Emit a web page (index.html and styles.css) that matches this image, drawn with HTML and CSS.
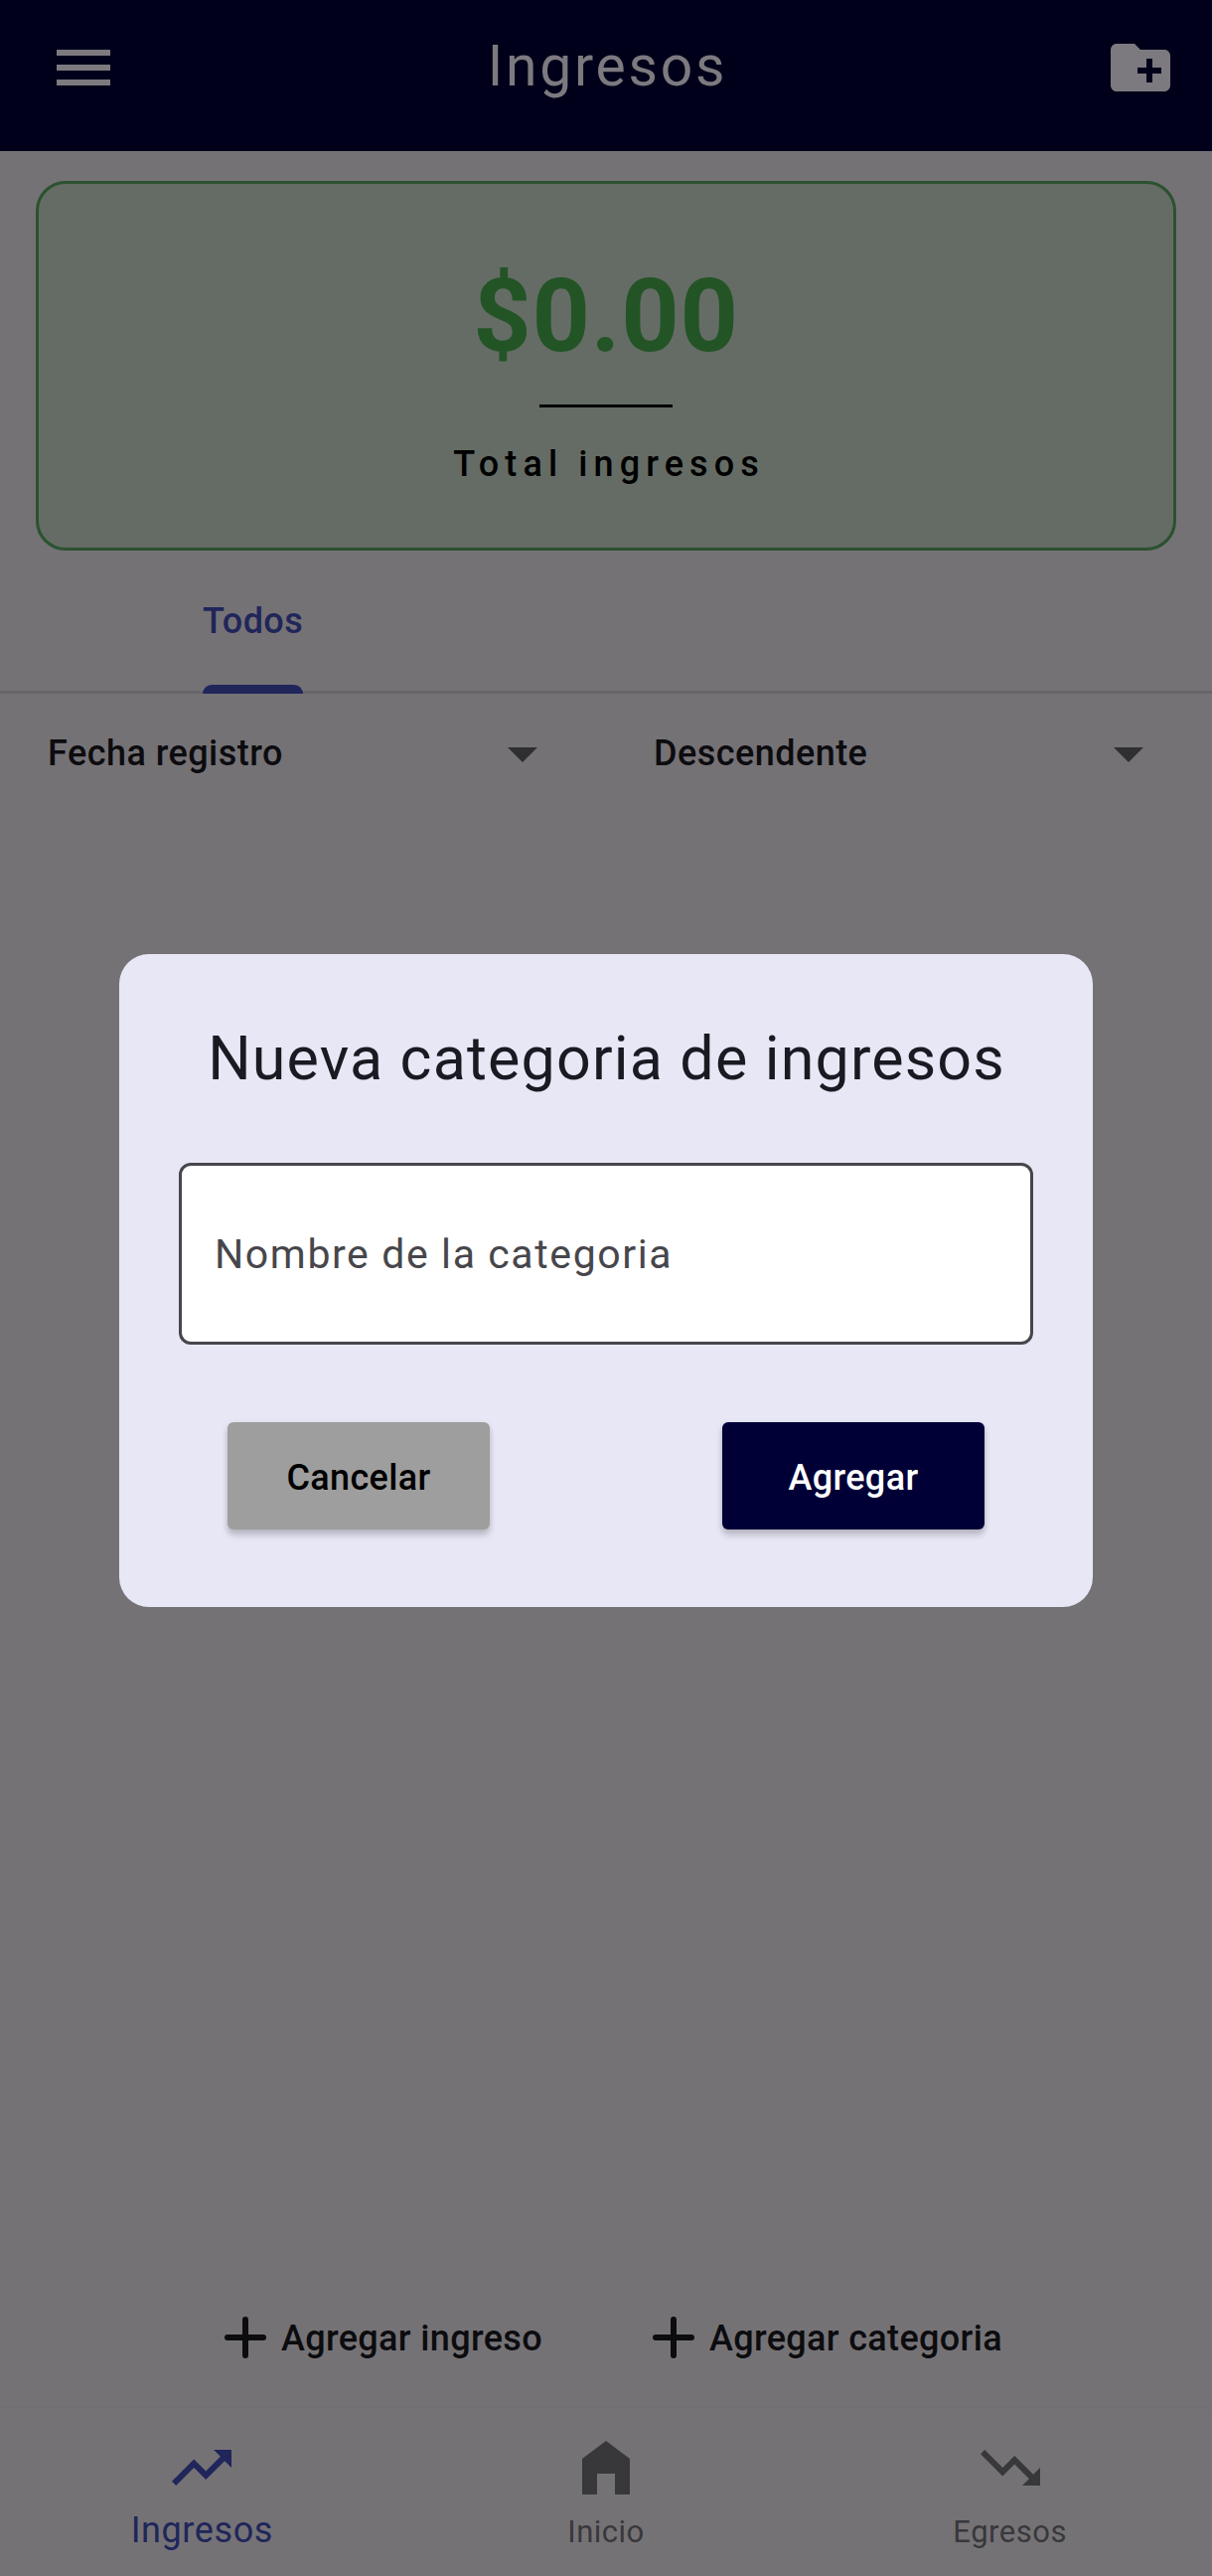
FILE: index.html
```html
<!DOCTYPE html>
<html lang="es">
<head>
<meta charset="utf-8">
<title>Ingresos</title>
<link rel="stylesheet" href="styles.css">
</head>
<body>
<div class="app">
  <header class="topbar">
    <svg class="icon" viewBox="0 0 24 24"><path d="M3 18h18v-2H3v2zm0-5h18v-2H3v2zm0-7v2h18V6H3z"/></svg>
    <h1 class="topbar-title">Ingresos</h1>
    <svg class="icon" viewBox="0 0 24 24"><path d="M20 6h-8l-2-2H4c-1.11 0-1.99.89-1.99 2L2 18c0 1.11.89 2 2 2h16c1.11 0 2-.89 2-2V8c0-1.11-.89-2-2-2zm-1 8h-3v3h-2v-3h-3v-2h3V9h2v3h3v2z"/></svg>
  </header>
  <section class="summary">
    <div class="amount">$0.00</div>
    <div class="rule"></div>
    <div class="caption">Total ingresos</div>
  </section>
  <nav class="tabs"><div class="tab"><span>Todos</span><div class="indicator"></div></div></nav>
  <div class="filters">
    <div class="filter"><span>Fecha registro</span><svg class="icon caret" viewBox="0 0 24 24"><path d="M7 10l5 5 5-5z"/></svg></div>
    <div class="filter"><span>Descendente</span><svg class="icon caret" viewBox="0 0 24 24"><path d="M7 10l5 5 5-5z"/></svg></div>
  </div>
  <main class="list"></main>
  <div class="actions">
    <div class="action"><svg class="plus" viewBox="0 0 42 42"><path d="M21 3v36M3 21h36"/></svg><span>Agregar ingreso</span></div>
    <div class="action"><svg class="plus" viewBox="0 0 42 42"><path d="M21 3v36M3 21h36"/></svg><span>Agregar categoria</span></div>
  </div>
  <footer class="bottomnav">
    <div class="item active"><svg class="icon" viewBox="0 0 24 24"><path d="M16 6l2.29 2.29-4.88 4.88-4-4L2 16.59 3.41 18l6-6 4 4 6.3-6.29L22 12V6z"/></svg><span>Ingresos</span></div>
    <div class="item"><svg class="icon" viewBox="0 0 24 24"><path d="M4 21V9l8-6 8 6v12h-5v-7H9v7z"/></svg><span>Inicio</span></div>
    <div class="item"><svg class="icon" viewBox="0 0 24 24"><path d="M16 18l2.29-2.29-4.88-4.88-4 4L2 7.41 3.41 6l6 6 4-4 6.3 6.29L22 12v6z"/></svg><span>Egresos</span></div>
  </footer>
</div>
<div class="scrim">
  <div class="dialog">
    <h2 class="dialog-title">Nueva categoria de ingresos</h2>
    <div class="field">Nombre de la categoria</div>
    <div class="buttons">
      <button class="btn cancel">Cancelar</button>
      <button class="btn add">Agregar</button>
    </div>
  </div>
</div>
</body>
</html>
```
FILE: styles.css
```css
* { box-sizing: border-box; margin: 0; }
body { font-family: Roboto, sans-serif; font-size: 36px; font-weight: 500; letter-spacing: .38px; background: #757276; color: #0c0c0f; }
.app { height: 2592px; display: flex; flex-direction: column; }
.icon { width: 72px; height: 72px; fill: currentColor; display: block; }

.topbar { height: 152px; padding: 32px 36px 0 48px; background: #00001a; color: #7c7a7f; display: flex; justify-content: space-between; align-items: flex-start; }
.topbar-title { font-size: 57px; font-weight: 400; line-height: 70px; letter-spacing: 2.75px; margin-right: 9px; }

.summary { margin: 30px 36px 0; height: 372px; border: 3px solid #2b522f; border-radius: 30px; background: #656c65; display: flex; flex-direction: column; align-items: center; padding-top: 73px; }
.amount { color: #235426; font-size: 102px; font-weight: 700; line-height: 120px; letter-spacing: .75px; }
.rule { width: 134px; height: 3px; background: #000; margin-top: 29px; }
.caption { color: #000; line-height: 44px; letter-spacing: 6.1px; margin-top: 35px; padding-left: 6px; }

.tabs { height: 144px; border-bottom: 3px solid #69666b; padding-left: 204px; display: flex; }
.tab { height: 144px; padding-top: 49px; line-height: 44px; color: #20265a; display: flex; flex-direction: column; justify-content: space-between; }
.indicator { height: 9px; flex: none; background: #20265a; border-radius: 9px 9px 0 0; }

.filters { display: grid; grid-template-columns: 1fr 1fr; height: 120px; letter-spacing: .46px; }
.filter { display: flex; justify-content: space-between; align-items: center; padding: 0 48px; }
.caret { color: #2f2f31; }
.list { flex: 1; }

.actions { display: flex; height: 138px; padding-left: 226px; gap: 111px; align-items: center; letter-spacing: .35px; }
.action { display: flex; align-items: center; gap: 15px; }
.action span { padding-top: 2px; }
.plus { width: 42px; height: 42px; stroke: currentColor; stroke-width: 6; stroke-linecap: round; fill: none; }

.bottomnav { height: 171px; border-top: 3px solid #727073; display: grid; grid-template-columns: repeat(3, 1fr); }
.item { display: flex; flex-direction: column; align-items: center; padding-top: 23px; color: #38383a; font-size: 31px; font-weight: 400; letter-spacing: .5px; line-height: 58px; }
.active { color: #20265a; font-size: 36px; letter-spacing: .6px; line-height: 54px; }

.scrim { position: absolute; inset: 0; height: 2592px; display: flex; align-items: center; justify-content: center; padding-bottom: 16px; }
.dialog { width: 980px; height: 657px; border-radius: 30px; background: #e8e7f6; padding: 65px 60px 0; }
.dialog-title { font-size: 61px; font-weight: 400; color: #191a22; text-align: center; line-height: 80px; letter-spacing: 1.15px; padding-left: 1px; white-space: nowrap; }
.field { margin-top: 65px; height: 183px; border: 3px solid #47464b; border-radius: 12px; background: #fff; color: #47464b; font-size: 41px; font-weight: 400; letter-spacing: 1.6px; display: flex; align-items: center; padding: 1px 33px 0; }
.buttons { display: flex; justify-content: space-between; margin-top: 78px; padding: 0 49px; }
.btn { width: 264px; height: 108px; border: 0; border-radius: 6px; padding: 4px 0 0; font: 500 36px Roboto, sans-serif; letter-spacing: .35px; box-shadow: 0 6px 6px rgba(0, 0, 0, .16), 0 2px 6px rgba(0, 0, 0, .1); }
.cancel { background: #9e9e9e; color: #000; }
.add { background: #000036; color: #fff; }
```
